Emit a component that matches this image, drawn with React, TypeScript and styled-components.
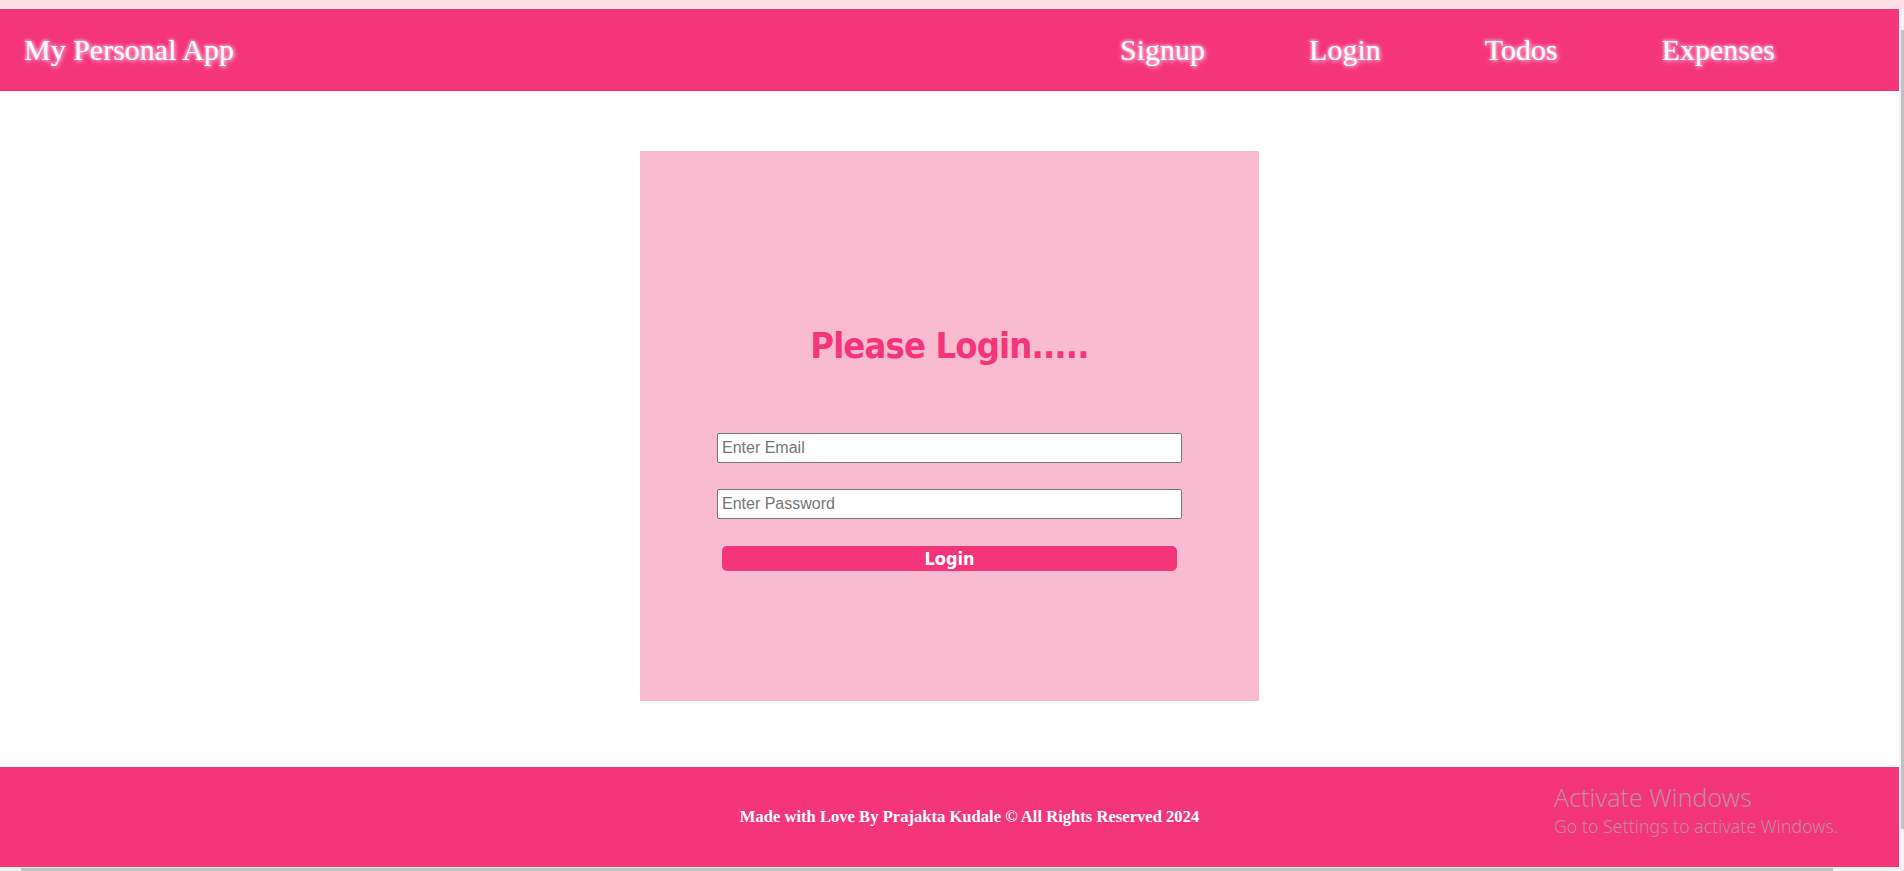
import React from "react";
import styled, { createGlobalStyle } from "styled-components";

const PINK = "#f5357a";

const GlobalStyle = createGlobalStyle`
  html, body {
    margin: 0;
    padding: 0;
    overflow: hidden;
  }
  body {
    background: #ffffff;
    font-family: "Liberation Serif", "Times New Roman", serif;
  }
  * { box-sizing: border-box; }
`;

const TopStrip = styled.div`
  height: 9px;
  background: #fde0e6;
`;

const Frame = styled.div`
  display: grid;
  grid-template-columns: 1fr 5px;
  grid-template-rows: 858px 4px;
  height: 862px;
`;

const Page = styled.div`
  display: flex;
  flex-direction: column;
  min-width: 0;
`;

const Header = styled.header`
  height: 82px;
  flex: none;
  background: ${PINK};
  display: flex;
  align-items: center;
  justify-content: space-between;
  padding: 0 124px 0 24px;
`;

const glow = `text-shadow: 1px 1px 4px rgba(255, 255, 255, 0.85), -1px -1px 3px rgba(255, 255, 255, 0.5);`;

const Brand = styled.div`
  color: #ffffff;
  font-family: "Liberation Serif", "Times New Roman", serif;
  font-size: 30px;
  ${glow}
`;

const Nav = styled.nav`
  display: flex;
  align-items: center;
  gap: 104px;
`;

const NavLink = styled.a`
  color: #ffffff;
  text-decoration: none;
  font-family: "Liberation Serif", "Times New Roman", serif;
  font-size: 30px;
  ${glow}
`;

const Main = styled.main`
  height: 676px;
  flex: none;
  display: flex;
  justify-content: center;
  padding-top: 60px;
`;

const Card = styled.section`
  width: 619px;
  height: 550px;
  background: #f8bbd0;
  display: flex;
  flex-direction: column;
  align-items: center;
  padding-top: 172px;
`;

const condensed = `
  font-family: "DejaVu Sans Condensed", "DejaVu Sans", "Arial Narrow", sans-serif;
  font-stretch: condensed;
  font-weight: 700;
`;

const Title = styled.h1`
  margin: 0 0 64px;
  height: 46px;
  line-height: 46px;
  color: ${PINK};
  ${condensed}
  font-size: 36px;
  letter-spacing: -0.85px;
`;

const Form = styled.form`
  display: flex;
  flex-direction: column;
  align-items: center;
  gap: 26px;
`;

const Input = styled.input`
  width: 465px;
  height: 30px;
  border: 1px solid #767676;
  border-radius: 2px;
  background: #ffffff;
  padding: 0 4px;
  font-family: "Liberation Sans", Arial, sans-serif;
  font-size: 16px;
  color: #222;
  outline: none;
  &::placeholder { color: #757575; }
`;

const Button = styled.button`
  width: 455px;
  height: 25px;
  margin-top: 1px;
  border: none;
  border-radius: 5px;
  background: ${PINK};
  color: #ffffff;
  ${condensed}
  font-size: 18px;
  line-height: 25px;
  padding: 0;
  cursor: pointer;
`;

const Footer = styled.footer`
  height: 100px;
  flex: none;
  background: ${PINK};
  display: flex;
  align-items: center;
  justify-content: center;
  padding-left: 40px;
  position: relative;
`;

const FooterText = styled.p`
  margin: 0;
  color: #ffffff;
  font-family: "Liberation Serif", "Times New Roman", serif;
  font-weight: 700;
  font-size: 16.6px;
`;

const Watermark = styled.div`
  position: absolute;
  left: 1554px;
  top: 14px;
  font-family: "Noto Sans", "Open Sans", sans-serif;
  color: rgba(170, 170, 175, 0.75);
  pointer-events: none;
`;

const WatermarkTitle = styled.div`
  font-size: 25px;
  line-height: 33px;
  font-weight: 300;
`;

const WatermarkSub = styled.div`
  font-size: 17.8px;
  line-height: 24px;
  font-weight: 300;
`;

const VTrack = styled.div`
  background: #f1f1f1;
  padding: 21px 0 0 2px;
`;

const VThumb = styled.div`
  width: 3px;
  height: 799px;
  background: #c1c1c1;
`;

const HTrack = styled.div`
  background: #f1f1f1;
  padding: 1px 0 0 21px;
`;

const HThumb = styled.div`
  width: 1812px;
  height: 3px;
  background: #c1c1c1;
`;

const Corner = styled.div`
  background: #f1f1f1;
`;

export default function App() {
  return (
    <>
      <GlobalStyle />
      <TopStrip />
      <Frame>
        <Page>
          <Header>
            <Brand>My Personal App</Brand>
            <Nav>
              <NavLink href="#">Signup</NavLink>
              <NavLink href="#">Login</NavLink>
              <NavLink href="#">Todos</NavLink>
              <NavLink href="#">Expenses</NavLink>
            </Nav>
          </Header>
          <Main>
            <Card>
              <Title>Please Login.....</Title>
              <Form onSubmit={(e) => e.preventDefault()}>
                <Input type="email" placeholder="Enter Email" />
                <Input type="password" placeholder="Enter Password" />
                <Button type="submit">Login</Button>
              </Form>
            </Card>
          </Main>
          <Footer>
            <FooterText>Made with Love By Prajakta Kudale © All Rights Reserved 2024</FooterText>
            <Watermark>
              <WatermarkTitle>Activate Windows</WatermarkTitle>
              <WatermarkSub>Go to Settings to activate Windows.</WatermarkSub>
            </Watermark>
          </Footer>
        </Page>
        <VTrack>
          <VThumb />
        </VTrack>
        <HTrack>
          <HThumb />
        </HTrack>
        <Corner />
      </Frame>
    </>
  );
}
